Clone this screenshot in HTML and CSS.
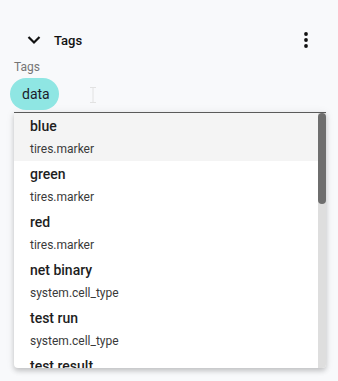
FILE: index.html
```html
<!DOCTYPE html>
<html>
<head>
<meta charset="utf-8">
<link rel="stylesheet" href="styles.css">
</head>
<body>
<div class="panel">
  <div class="header">
    <span class="chevron">
      <svg width="14" height="10" viewBox="0 0 14 10"><path d="M1.5 2 L7 7.5 L12.5 2" fill="none" stroke="#111" stroke-width="2.2"/></svg>
    </span>
    <span class="title">Tags</span>
    <span class="spacer"></span>
    <span class="more">
      <svg width="6" height="18" viewBox="0 0 6 18"><circle cx="3" cy="3" r="1.9" fill="#111"/><circle cx="3" cy="9" r="1.9" fill="#111"/><circle cx="3" cy="15" r="1.9" fill="#111"/></svg>
    </span>
  </div>
  <div class="field-label">Tags</div>
  <div class="chips-row">
    <span class="chip">data</span>
    <span class="caret">
      <svg width="8" height="16" viewBox="0 0 8 16"><path d="M1 0.5 H7 M4 0.5 V15.5 M1 15.5 H7" fill="none" stroke="#e2e2e2" stroke-width="1"/></svg>
    </span>
  </div>
  <div class="dropdown">
    <ul class="list">
      <li class="item active"><div class="item-title">blue</div><div class="item-sub">tires.marker</div></li>
      <li class="item"><div class="item-title">green</div><div class="item-sub">tires.marker</div></li>
      <li class="item"><div class="item-title">red</div><div class="item-sub">tires.marker</div></li>
      <li class="item"><div class="item-title">net binary</div><div class="item-sub">system.cell_type</div></li>
      <li class="item"><div class="item-title">test run</div><div class="item-sub">system.cell_type</div></li>
      <li class="item"><div class="item-title">test result</div><div class="item-sub">system.cell_type</div></li>
    </ul>
    <div class="scrollbar">
      <div class="thumb"></div>
    </div>
  </div>
</div>
</body>
</html>
```

FILE: styles.css
```css
html, body {
  margin: 0;
  padding: 0;
  background: #f8f9fb;
  font-family: Roboto, "Liberation Sans", sans-serif;
}

.panel {
  padding: 28px 0 0 0;
  width: 338px;
  height: 381px;
  box-sizing: border-box;
}

.header {
  display: flex;
  align-items: center;
  height: 24px;
  padding: 0 0 0 27px;
}

.chevron {
  display: flex;
  width: 14px;
  height: 10px;
}

.title {
  margin-left: 13px;
  font-size: 13px;
  font-weight: 500;
  color: #111;
}

.spacer {
  flex: 1;
}

.more {
  display: flex;
  width: 6px;
  height: 18px;
  margin-right: 29px;
}

.field-label {
  margin: 7px 0 0 14px;
  font-size: 12px;
  line-height: 16px;
  color: #757575;
}

.chips-row {
  display: flex;
  align-items: center;
  margin: 2px 0 0 10px;
  height: 33px;
}

.chip {
  display: inline-flex;
  align-items: center;
  height: 32px;
  padding: 0 9px 0 12px;
  border-radius: 16px;
  background: #8fe6e3;
  font-size: 14px;
  color: #1c1c2a;
}

.caret {
  display: flex;
  margin-left: 30px;
  margin-top: 2px;
}

.dropdown {
  display: flex;
  margin: 2px 0 0 14px;
  width: 312px;
  height: 256px;
  box-sizing: border-box;
  background: #fff;
  border-top: 1px solid #5a5a5a;
  border-radius: 0 0 4px 4px;
  box-shadow: 0 3px 5px rgba(0,0,0,0.18), 0 1px 10px rgba(0,0,0,0.08);
  overflow: hidden;
}

.list {
  flex: 1;
  list-style: none;
  margin: 0;
  padding: 0;
  overflow: hidden;
}

.scrollbar {
  width: 8px;
  background: #dedede;
  display: flex;
  flex-direction: column;
}

.thumb {
  height: 91px;
  background: #6e6e6e;
  border-radius: 4px;
}

.item {
  height: 48px;
  box-sizing: border-box;
  padding: 3px 16px 4px 16px;
}

.item.active {
  background: #f4f4f4;
}

.item-title {
  font-size: 14px;
  font-weight: 500;
  line-height: 20px;
  color: #1e1e1e;
}

.item-sub {
  margin-top: 5px;
  font-size: 12px;
  line-height: 16px;
  color: #3a3a3a;
}
```
